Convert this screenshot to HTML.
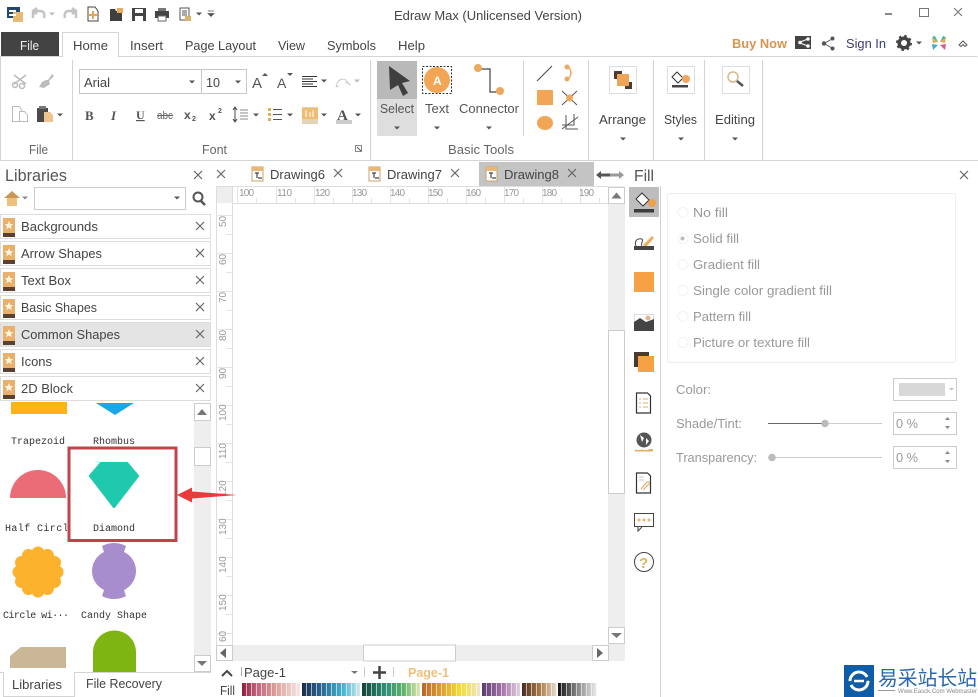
<!DOCTYPE html>
<html><head><meta charset="utf-8"><title>Edraw Max</title>
<style>
html,body{margin:0;padding:0;background:#fff;width:978px;height:697px;overflow:hidden}
svg{display:block;position:absolute;left:0;top:0}
text{font-family:"Liberation Sans","Noto Sans CJK SC",sans-serif;font-size:13px;fill:#444}
.g{fill:#999}
.m{font-family:"Liberation Mono",monospace;font-size:10px;fill:#333}
.r{font-size:10px;fill:#999}
.ln{stroke:#d4d4d4;stroke-width:1;fill:none}
.x{stroke:#555;stroke-width:1.2;fill:none}
</style></head><body>
<svg width="978" height="697" viewBox="0 0 978 697" xmlns="http://www.w3.org/2000/svg">
<defs>
<linearGradient id="c1"><stop offset="0" stop-color="#8e1f3a"/><stop offset=".25" stop-color="#c2607e"/><stop offset=".6" stop-color="#dda49a"/><stop offset="1" stop-color="#f6e6ea"/></linearGradient>
<linearGradient id="c2"><stop offset="0" stop-color="#1c2b4a"/><stop offset=".35" stop-color="#2a6a96"/><stop offset=".7" stop-color="#3fb4d0"/><stop offset="1" stop-color="#cfeaee"/></linearGradient>
<linearGradient id="c3"><stop offset="0" stop-color="#124436"/><stop offset=".4" stop-color="#2f8f78"/><stop offset=".7" stop-color="#5cb06a"/><stop offset="1" stop-color="#dfe8b0"/></linearGradient>
<linearGradient id="c4"><stop offset="0" stop-color="#b8682a"/><stop offset=".35" stop-color="#e0a030"/><stop offset=".65" stop-color="#f5dc30"/><stop offset="1" stop-color="#efe6c8"/></linearGradient>
<linearGradient id="c5"><stop offset="0" stop-color="#5c3c70"/><stop offset=".5" stop-color="#a070a4"/><stop offset="1" stop-color="#e0d0e0"/></linearGradient>
<linearGradient id="c6"><stop offset="0" stop-color="#4a2c20"/><stop offset=".5" stop-color="#a87848"/><stop offset="1" stop-color="#e8e0d4"/></linearGradient>
<linearGradient id="c7"><stop offset="0" stop-color="#111"/><stop offset=".5" stop-color="#888"/><stop offset="1" stop-color="#eee"/></linearGradient>
<pattern id="st" width="5" height="14" patternUnits="userSpaceOnUse" x="242"><rect x="4" width="1" height="14" fill="#fff" fill-opacity=".6"/></pattern>
<g id="lib"><rect x="0" y="0" width="12" height="19" fill="#e9b06c"/><rect x="0" y="15" width="12" height="4" fill="#5a4030"/><path d="M6 3l1.300 3 3 .2-2.300 2 .8 3-2.800-1.700-2.800 1.700.8-3-2.300-2 3-.2z" fill="#fff4dc"/></g>
<path id="cl" d="M-4-4L4 4M4-4L-4 4" stroke="#666" stroke-width="1.200" fill="none"/>
<g id="doc"><rect x="0" y="0" width="11" height="14" fill="#fff" stroke="#c9a36b"/><rect x="0" y="0" width="11" height="4" fill="#e8b878"/><path d="M3 6h4M5 6v5M6 11h4" stroke="#444" stroke-width="1.200" fill="none"/></g>
<path id="ar" d="M-3-1.500h6L0 1.500z" fill="#555"/>
<path id="au" d="M-5 3L0-3 5 3z" fill="#777"/>
</defs>

<!-- title bar -->
<rect x="7" y="7" width="13" height="11" fill="#25496e"/><rect x="13" y="12" width="10" height="10" fill="#e5bb74" /><rect x="9" y="10" width="7" height="2" fill="#fff"/><rect x="9" y="14" width="7" height="2" fill="#fff"/>
<path d="M33 18v-7h7c4 0 5 3 4 7M33 11l4-3M33 11l4 3" stroke="#c4c4c4" stroke-width="2.500" fill="none"/>
<path d="M49 12.500h6L52 15.500z" fill="#bbb"/>
<path d="M76 18v-7h-7c-4 0-5 3-4 7M76 11l-4-3M76 11l-4 3" stroke="#c4c4c4" stroke-width="2.500" fill="none"/>
<path d="M88 7h7l3 4v10H88z" fill="#fff" stroke="#444"/><path d="M93 11v8M89 15h8" stroke="#e6a24e" stroke-width="2"/>
<path d="M110 9h5l1 2h6v10h-12z" fill="#3f3f3f"/><rect x="117" y="8" width="6" height="5" fill="#eaa95c"/>
<path d="M132 8h14v13h-14z" fill="#444"/><rect x="135" y="9" width="8" height="4" fill="#fff"/><rect x="135" y="16" width="8" height="5" fill="#fff"/>
<rect x="155" y="11" width="14" height="7" fill="#444"/><rect x="158" y="8" width="8" height="3" fill="#777"/><rect x="158" y="16" width="8" height="5" fill="#fff" stroke="#666"/>
<path d="M180 8h9v12h-9z" fill="#fff" stroke="#555"/><path d="M182 11h5M182 13h5M182 15h5" stroke="#555"/><rect x="185" y="16" width="6" height="5" fill="#d8b36e"/>
<use href="#ar" x="199" y="14"/>
<path d="M208 11h6M208 13.500h6l-3 3z" fill="#555" stroke="#555" stroke-width=".7"/>
<text x="394" y="20" textLength="188" lengthAdjust="spacingAndGlyphs">Edraw Max (Unlicensed Version)</text>
<rect x="885" y="13" width="7" height="2" fill="#888"/>
<rect x="919.500" y="8.500" width="9" height="8" fill="none" stroke="#777"/>
<path d="M954 8l8 8M962 8l-8 8" stroke="#777" stroke-width="1.100"/>

<!-- menu tabs -->
<rect x="1" y="32" width="58" height="24" fill="#434343"/>
<text x="20" y="50" textLength="19" style="fill:#eee" lengthAdjust="spacingAndGlyphs">File</text>
<path d="M0.500 160.500V56.500H62.500V32.500H118.500V56.500H977.500" class="ln"/>
<rect x="63" y="33" width="55" height="25" fill="#fff"/>
<text x="73" y="50" textLength="35" lengthAdjust="spacingAndGlyphs">Home</text>
<text x="130" y="50" textLength="33" lengthAdjust="spacingAndGlyphs">Insert</text>
<text x="185" y="50" textLength="71" lengthAdjust="spacingAndGlyphs">Page Layout</text>
<text x="278" y="50" textLength="27" lengthAdjust="spacingAndGlyphs">View</text>
<text x="327" y="50" textLength="49" lengthAdjust="spacingAndGlyphs">Symbols</text>
<text x="398" y="50" textLength="27" lengthAdjust="spacingAndGlyphs">Help</text>
<text x="732" y="48" textLength="55" lengthAdjust="spacingAndGlyphs" style="font-weight:bold;fill:#d99450">Buy Now</text>
<rect x="795" y="36" width="16" height="13" fill="#444"/><path d="M800 42l8-3M800 43l8 3" stroke="#fff"/><circle cx="800" cy="42.500" r="1.800" fill="#fff"/><circle cx="808" cy="39" r="1.800" fill="#fff"/><circle cx="808" cy="46" r="1.800" fill="#fff"/>
<path d="M824 43.500l9-5M824 43.500l9 5" stroke="#555"/><circle cx="824" cy="43.500" r="2.200" fill="#555"/><circle cx="832.500" cy="38.500" r="2" fill="#555"/><circle cx="832.500" cy="48.500" r="2" fill="#555"/>
<text x="846" y="48" textLength="40" lengthAdjust="spacingAndGlyphs" style="fill:#3c3c78">Sign In</text>
<circle cx="904" cy="43" r="4.800" fill="none" stroke="#444" stroke-width="3.500"/><circle cx="904" cy="43" r="7" fill="none" stroke="#444" stroke-width="2" stroke-dasharray="2.500 3"/>
<use href="#ar" x="919" y="43"/>
<path d="M932 37l6 5-5 1zM946 37l-6 5 5 1z" fill="#e9a84c"/><path d="M932 37l6 5-3-6z" fill="#3db8a8"/><path d="M946 37l-6 5 3-6z" fill="#3db8a8"/><path d="M933 50l5-5-6-1z" fill="#4aa8c8"/><path d="M945 50l-5-5 6-1z" fill="#d85c8c"/>
<path d="M959 45l4-4 4 4-2 1.500-2-2-2 2z" fill="none" stroke="#555"/>

<!-- ribbon -->
<path d="M0 160.500H978" class="ln"/>
<path d="M72.500 60V160M370.500 60V160M588.500 60V160M653.500 60V160M704.500 60V160M762.500 60V160M523.500 61V136" class="ln"/>
<!-- clipboard icons -->
<path d="M14 75l12 9M26 75l-12 9" stroke="#bbb" stroke-width="1.500"/><circle cx="15" cy="85" r="2.500" fill="none" stroke="#bbb" stroke-width="1.500"/><circle cx="22" cy="86" r="2.500" fill="none" stroke="#bbb" stroke-width="1.500"/>
<path d="M52 74l2 2-5 5 1 3-6 4-5-1 3-5 4-2 2 0z" fill="#bcbcbc"/>
<path d="M12.500 106.500h7l3 5v10h-10z" fill="#fff" stroke="#bbb"/><path d="M19.500 111.500h5l3 4v6h-8z" fill="#fff" stroke="#bbb"/>
<rect x="37" y="108" width="11" height="14" fill="#4a4a4a"/><rect x="39" y="106" width="7" height="3" fill="#777"/><path d="M44 112h6l3 3v7h-9z" fill="#eec58e"/>
<use href="#ar" x="60" y="115"/>
<text x="29" y="154" textLength="19" lengthAdjust="spacingAndGlyphs" style="fill:#666">File</text>
<!-- font controls -->
<rect x="79.500" y="69.500" width="167" height="24" fill="#fff" stroke="#c8c8c8"/><path d="M201.500 69v25" stroke="#c8c8c8"/>
<text x="84" y="87" textLength="26" lengthAdjust="spacingAndGlyphs">Arial</text><use href="#ar" x="192" y="82"/>
<text x="206" y="87" textLength="14" lengthAdjust="spacingAndGlyphs">10</text><use href="#ar" x="238" y="82"/>
<text x="252" y="88" style="font-size:15px;fill:#555">A</text><path d="M262 76l3-3 3 3z" fill="#555"/>
<text x="277" y="88" style="font-size:14px;fill:#555">A</text><path d="M287 73l3 3 3-3z" fill="#555"/>
<path d="M302 76.500h15M302 79h11M302 81.500h15M302 84h11M302 86.500h15" stroke="#333"/><use href="#ar" x="324" y="81"/>
<path d="M336 87c2-10 10-10 13-3M345 82l6 3M336 87l3-1" stroke="#ccc" fill="none"/><path d="M354 79.500h6L357 82.500z" fill="#bbb"/>
<text x="85" y="120" style="font:bold 13px 'Liberation Serif',serif;fill:#555">B</text>
<text x="111" y="120" style="font:italic bold 13px 'Liberation Serif',serif;fill:#555">I</text>
<text x="136" y="119" style="font:bold 12px 'Liberation Serif',serif;fill:#555;text-decoration:underline">U</text>
<text x="157" y="119" textLength="16" lengthAdjust="spacingAndGlyphs" style="font-size:11px;fill:#666">abc</text><path d="M157 115.500h16" stroke="#666"/>
<text x="184" y="119" style="font-size:12px;font-weight:bold;fill:#555">x</text><text x="192" y="121" style="font-size:7px;font-weight:bold;fill:#555">2</text>
<text x="209" y="120" style="font-size:12px;font-weight:bold;fill:#555">x</text><text x="218" y="113" style="font-size:7px;font-weight:bold;fill:#555">2</text>
<path d="M235 108v13M233 110l2-3 2 3M233 119l2 3 2-3" stroke="#444" fill="none"/><path d="M240 110h8M240 113h8M240 116h8M240 119h8" stroke="#888"/><use href="#ar" x="256" y="115"/>
<rect x="268" y="108" width="3" height="3" fill="#e0b060"/><rect x="268" y="113" width="3" height="3" fill="#e0b060"/><rect x="268" y="118" width="3" height="3" fill="#e0b060"/><path d="M273 109.500h9M273 114.500h9M273 119.500h9" stroke="#555"/><use href="#ar" x="290" y="115"/>
<rect x="302" y="107" width="16" height="17" fill="#e5d3b8"/><rect x="302" y="108" width="16" height="11" fill="#eebd72"/><path d="M306 110v7M310 112v5M313 110v7" stroke="#fff"/><use href="#ar" x="324" y="115"/>
<text x="337" y="120" style="font:bold 15px 'Liberation Serif',serif;fill:#555">A</text><rect x="336" y="120" width="16" height="4" fill="#ccc"/><use href="#ar" x="358" y="115"/>
<text x="202" y="154" textLength="25" lengthAdjust="spacingAndGlyphs" style="fill:#666">Font</text>
<path d="M355.500 145.500h6v6h-6z" fill="none" stroke="#888"/><path d="M357 147l4 4" stroke="#555"/>
<!-- basic tools -->
<rect x="377" y="61" width="40" height="38" fill="#b9b9b9"/><rect x="377" y="99" width="40" height="37" fill="#dedede"/>
<path d="M389 66l21 15-8 2 6 10-5 3-5-11-8 5z" fill="#3f3f3f"/>
<text x="380" y="113" textLength="34" lengthAdjust="spacingAndGlyphs" style="fill:#555">Select</text><use href="#ar" x="397" y="128"/>
<rect x="422.500" y="66.500" width="29" height="27" fill="none" stroke="#333" stroke-dasharray="2 1.500"/>
<circle cx="437" cy="80" r="13" fill="#f2a555"/><text x="433" y="85" style="font-size:12px;font-weight:bold;fill:#fff">A</text>
<text x="425" y="113" textLength="24" lengthAdjust="spacingAndGlyphs" style="fill:#555">Text</text><use href="#ar" x="437" y="128"/>
<path d="M478 69h12v23h10" stroke="#444" stroke-width="1.200" fill="none"/><circle cx="478" cy="68" r="4" fill="#eea85c"/><circle cx="500" cy="91" r="4" fill="#eea85c"/>
<text x="459" y="113" textLength="60" lengthAdjust="spacingAndGlyphs" style="fill:#555">Connector</text><use href="#ar" x="489" y="128"/>
<text x="448" y="154" textLength="66" lengthAdjust="spacingAndGlyphs" style="fill:#666">Basic Tools</text>
<path d="M537 81l15-15" stroke="#444"/>
<path d="M566 67c6-1 7 12 0 12" fill="none" stroke="#f0a860" stroke-width="1.500"/><circle cx="567" cy="67" r="2.500" fill="#eea85c"/><circle cx="567" cy="79" r="2.500" fill="#eea85c"/>
<rect x="537" y="90" width="16" height="15" fill="#f2a555"/>
<path d="M562 91l15 14M577 91l-15 14" stroke="#555"/><circle cx="569.500" cy="98" r="3.500" fill="#eea85c"/>
<ellipse cx="545" cy="123" rx="8" ry="7" fill="#f2a555"/>
<path d="M566 115v14h12M562 125h12v-11M562 129l16-12" stroke="#555" fill="none"/>
<!-- arrange etc -->
<rect x="609.500" y="66.500" width="27" height="27" fill="#fff" stroke="#ddd"/><rect x="614" y="71" width="8" height="8" fill="#4c3c30"/><rect x="625" y="82" width="7" height="7" fill="#4c3c30"/><rect x="617" y="74" width="12" height="12" fill="#eea558"/>
<text x="599" y="124" textLength="47" lengthAdjust="spacingAndGlyphs">Arrange</text><use href="#ar" x="623" y="139"/>
<rect x="667.500" y="66.500" width="27" height="27" fill="#fff" stroke="#ddd"/><path d="M672 77l5-5 6 6-5 5z" fill="#fff" stroke="#333"/><circle cx="686" cy="79" r="4" fill="#eea85c"/><rect x="672" y="85" width="16" height="2.500" fill="#444"/>
<text x="664" y="124" textLength="33" lengthAdjust="spacingAndGlyphs">Styles</text><use href="#ar" x="681" y="139"/>
<rect x="722.500" y="66.500" width="27" height="27" fill="#fff" stroke="#ddd"/><circle cx="733" cy="77" r="5" fill="#fff" stroke="#d8b88c" stroke-width="1.500"/><path d="M737 81l6 5" stroke="#555" stroke-width="2.500"/>
<text x="715" y="124" textLength="40" lengthAdjust="spacingAndGlyphs">Editing</text><use href="#ar" x="735" y="139"/>

<!-- Left panel -->
<text x="5" y="181" textLength="62" lengthAdjust="spacingAndGlyphs" style="font-size:17px;fill:#555">Libraries</text>
<use href="#cl" x="198" y="175"/>
<path d="M4 198l8-7 8 7z" fill="#c99858"/><rect x="7" y="198" width="10" height="8" fill="#eec080"/>
<path d="M22 196.500h6L25 199.500z" fill="#888"/>
<rect x="34.500" y="187.500" width="151" height="22" fill="#fff" stroke="#ccc"/><use href="#ar" x="177" y="198"/>
<circle cx="198" cy="197" r="4.500" fill="none" stroke="#555" stroke-width="2"/><path d="M201 201l4 4" stroke="#555" stroke-width="2.500"/>
<!-- lib list -->
<g fill="#fff" stroke="#ddd">
<rect x="0.500" y="214.500" width="210" height="24"/><rect x="0.500" y="241.500" width="210" height="24"/><rect x="0.500" y="268.500" width="210" height="24"/><rect x="0.500" y="295.500" width="210" height="24"/><rect x="0.500" y="322.500" width="210" height="24" style="fill:#e4e4e4"/><rect x="0.500" y="349.500" width="210" height="24"/><rect x="0.500" y="376.500" width="210" height="24"/>
</g>
<use href="#lib" x="3" y="218"/><use href="#lib" x="3" y="245"/><use href="#lib" x="3" y="272"/><use href="#lib" x="3" y="299"/><use href="#lib" x="3" y="326"/><use href="#lib" x="3" y="353"/><use href="#lib" x="3" y="380"/>
<text x="21" y="231" textLength="77" lengthAdjust="spacingAndGlyphs">Backgrounds</text>
<text x="21" y="258" textLength="81" lengthAdjust="spacingAndGlyphs">Arrow Shapes</text>
<text x="21" y="285" textLength="50" lengthAdjust="spacingAndGlyphs">Text Box</text>
<text x="21" y="312" textLength="76" lengthAdjust="spacingAndGlyphs">Basic Shapes</text>
<text x="21" y="339" textLength="99" lengthAdjust="spacingAndGlyphs">Common Shapes</text>
<text x="21" y="366" textLength="31" lengthAdjust="spacingAndGlyphs">Icons</text>
<text x="21" y="393" textLength="52" lengthAdjust="spacingAndGlyphs">2D Block</text>
<use href="#cl" x="200" y="226"/><use href="#cl" x="200" y="253"/><use href="#cl" x="200" y="280"/><use href="#cl" x="200" y="307"/><use href="#cl" x="200" y="334"/><use href="#cl" x="200" y="361"/><use href="#cl" x="200" y="388"/>

<!-- shapes -->
<rect x="11" y="402" width="56" height="12" fill="#fdb414"/>
<path d="M96 403h38l-19 12z" fill="#1ca8e8"/>
<text class="m" x="11" y="444" textLength="54">Trapezoid</text>
<text class="m" x="93" y="444" textLength="42">Rhombus</text>
<path d="M10 498a28 28 0 0 1 56 0z" fill="#ea6c76"/>
<text class="m" x="5" y="531" textLength="70">Half Circle</text>
<rect x="67" y="520" width="10" height="16" fill="#fff"/>
<path d="M101 463.500h26l10.500 12.500-23.500 30.500-23.500-30.500z" fill="#1fc9ad" stroke="#1fc9ad" stroke-linejoin="round" stroke-width="3"/>
<text class="m" x="93" y="531" textLength="42">Diamond</text>
<rect x="69" y="448" width="107" height="92.500" fill="none" stroke="#c2444a" stroke-width="3"/>
<g fill="#fdb22e"><circle cx="38" cy="572" r="20"/><circle cx="57" cy="572" r="6.500"/><circle cx="54.500" cy="581.500" r="6.500"/><circle cx="47.500" cy="588.500" r="6.500"/><circle cx="38" cy="591" r="6.500"/><circle cx="28.500" cy="588.500" r="6.500"/><circle cx="21.500" cy="581.500" r="6.500"/><circle cx="19" cy="572" r="6.500"/><circle cx="21.500" cy="562.500" r="6.500"/><circle cx="28.500" cy="555.500" r="6.500"/><circle cx="38" cy="553" r="6.500"/><circle cx="47.500" cy="555.500" r="6.500"/><circle cx="54.500" cy="562.500" r="6.500"/></g>
<path d="M102 546c7-4 17-4 24 0l-2 6c16 8 16 30 0 38l2 6c-7 4-17 4-24 0l2-6c-16-8-16-30 0-38z" fill="#a78dcb"/>
<text class="m" x="3" y="618" textLength="66">Circle wi···</text>
<text class="m" x="81" y="618" textLength="66">Candy Shape</text>
<path d="M21 647h45v21H10v-12z" fill="#c9b797"/>
<path d="M93 672v-20a21.500 21.500 0 0 1 43 0v20z" fill="#7fb512"/>
<!-- left scrollbar -->
<rect x="194" y="403" width="17" height="269" fill="#eee"/>
<rect x="194.500" y="403.500" width="16" height="17" fill="#fff" stroke="#ccc"/><use href="#au" x="202" y="412"/>
<rect x="194.500" y="447.500" width="16" height="18" fill="#fff" stroke="#ccc"/>
<rect x="194.500" y="655.500" width="16" height="16" fill="#fff" stroke="#ccc"/><path d="M197 661h10l-5 5z" fill="#777"/>
<!-- bottom tabs -->
<path d="M0 672.500H3.500V696.500H74.500V672.500H211" class="ln"/>
<rect x="4" y="672" width="70" height="2" fill="#fff"/>
<text x="12" y="689" textLength="50" lengthAdjust="spacingAndGlyphs">Libraries</text>
<text x="86" y="688" textLength="76" lengthAdjust="spacingAndGlyphs">File Recovery</text>

<!-- tabs bar -->
<use href="#cl" x="221" y="174" />
<rect x="479" y="162" width="115" height="24" fill="#c4c4c4"/>
<use href="#doc" x="252" y="167"/><use href="#doc" x="369" y="167"/><use href="#doc" x="486" y="167"/>
<text x="270" y="179" textLength="55" lengthAdjust="spacingAndGlyphs">Drawing6</text><use href="#cl" x="338" y="173"/>
<text x="387" y="179" textLength="55" lengthAdjust="spacingAndGlyphs">Drawing7</text><use href="#cl" x="455" y="173"/>
<text x="504" y="179" textLength="55" lengthAdjust="spacingAndGlyphs">Drawing8</text><use href="#cl" x="572" y="173"/>
<path d="M596 175l5-4v2.500h9v3h-9v2.500z" fill="#555"/><path d="M624 175l-5-4v2.500h-9v3h9v2.500z" fill="#999"/>

<!-- canvas rulers -->
<rect x="216" y="187" width="17" height="16" fill="#eee"/>
<path d="M216 186.500H608M233 203.500H608M216.500 187V645M232.500 187V645" stroke="#ddd" fill="none"/>
<path d="M237.500 187V203M276.500 187V203M314.500 187V203M352.500 187V203M390.500 187V203M428.500 187V203M466.500 187V203M504.500 187V203M542.500 187V203M580.500 187V203" stroke="#e4e4e4"/>
<path d="M256.500 198V203M295.500 198V203M333.500 198V203M371.500 198V203M409.500 198V203M447.500 198V203M485.500 198V203M523.500 198V203M561.500 198V203M599.500 198V203" stroke="#e4e4e4"/>
<text class="r" x="239" y="196" textLength="15">100</text><text class="r" x="277" y="196" textLength="15">110</text><text class="r" x="315" y="196" textLength="15">120</text><text class="r" x="352" y="196" textLength="15">130</text><text class="r" x="390" y="196" textLength="15">140</text><text class="r" x="428" y="196" textLength="15">150</text><text class="r" x="466" y="196" textLength="15">160</text><text class="r" x="504" y="196" textLength="15">170</text><text class="r" x="542" y="196" textLength="15">180</text><text class="r" x="579" y="196" textLength="15">190</text>
<path d="M216 215.500H233M216 253.500H233M216 291.500H233M216 329.500H233M216 367.500H233M216 405.500H233M216 443.500H233M216 481.500H233M216 519.500H233M216 557.500H233M216 595.500H233M216 633.500H233" stroke="#e4e4e4"/>
<path d="M226 234.500H233M226 272.500H233M226 310.500H233M226 348.500H233M226 386.500H233M226 424.500H233M226 462.500H233M226 500.500H233M226 538.500H233M226 576.500H233M226 614.500H233" stroke="#e4e4e4"/>
<g class="vr">
<text class="r" transform="translate(226,227) rotate(-90)">50</text>
<text class="r" transform="translate(226,265) rotate(-90)">60</text>
<text class="r" transform="translate(226,303) rotate(-90)">70</text>
<text class="r" transform="translate(226,341) rotate(-90)">80</text>
<text class="r" transform="translate(226,379) rotate(-90)">90</text>
<text class="r" transform="translate(226,421) rotate(-90)">100</text>
<text class="r" transform="translate(226,459) rotate(-90)">110</text>
<text class="r" transform="translate(226,497) rotate(-90)">120</text>
<text class="r" transform="translate(226,535) rotate(-90)">130</text>
<text class="r" transform="translate(226,573) rotate(-90)">140</text>
<text class="r" transform="translate(226,611) rotate(-90)">150</text>
<text class="r" transform="translate(226,642) rotate(-90)">60</text>
</g>
<!-- canvas scrollbars -->
<rect x="608" y="186" width="17" height="475" fill="#eee"/>
<rect x="608.500" y="187.500" width="16" height="16" fill="#fff" stroke="#ccc"/><use href="#au" x="616.500" y="195.500"/>
<rect x="608.500" y="330.500" width="16" height="163" fill="#fff" stroke="#ccc"/>
<rect x="608.500" y="627.500" width="16" height="16" fill="#fff" stroke="#ccc"/><path d="M611 633h11l-5.500 5z" fill="#777"/>
<rect x="233" y="645" width="375" height="16" fill="#eee"/>
<rect x="216.500" y="645.500" width="16" height="15" fill="#fff" stroke="#ccc"/><path d="M226 648v10l-6-5z" fill="#666"/>
<rect x="363.500" y="645" width="92" height="16" fill="#fff" stroke="#ccc"/>
<rect x="592.500" y="645.500" width="16" height="15" fill="#fff" stroke="#ccc"/><path d="M597 648v10l6-5z" fill="#666"/>

<!-- red arrow over the scrollbars and ruler -->
<path d="M237 495l-45-3.500 0-4-15 7.500 15 7.500 0-4z" fill="#ea3a3e"/>

<!-- bottom bar -->
<path d="M222 676l5-5 5 5" fill="none" stroke="#444" stroke-width="2"/>
<path d="M241.500 667v9" stroke="#aaa"/>
<text x="244" y="677" textLength="42" lengthAdjust="spacingAndGlyphs">Page-1</text>
<path d="M351 671h7l-3.500 3z" fill="#777"/>
<path d="M364.500 667v10M393.500 667v10" stroke="#ccc"/>
<path d="M373 672.500h13M379.500 666v13" stroke="#444" stroke-width="2.500"/>
<text x="408" y="677" textLength="41" lengthAdjust="spacingAndGlyphs" style="font-weight:bold;fill:#eec07c">Page-1</text>
<text x="220" y="695" textLength="15" lengthAdjust="spacingAndGlyphs">Fill</text>
<rect x="242" y="683" width="58" height="13" fill="url(#c1)"/>
<rect x="302" y="683" width="58" height="13" fill="url(#c2)"/>
<rect x="362" y="683" width="58" height="13" fill="url(#c3)"/>
<rect x="422" y="683" width="58" height="13" fill="url(#c4)"/>
<rect x="482" y="683" width="38" height="13" fill="url(#c5)"/>
<rect x="522" y="683" width="35" height="13" fill="url(#c6)"/>
<rect x="558" y="683" width="39" height="13" fill="url(#c7)"/>
<rect x="242" y="683" width="355" height="13" fill="url(#st)"/>

<!-- right panel -->
<text x="634" y="181" textLength="20" lengthAdjust="spacingAndGlyphs" style="font-size:16px;fill:#555">Fill</text>
<use href="#cl" x="964" y="175"/>
<path d="M660.500 186V697" stroke="#d0d0d0"/>
<rect x="629" y="187" width="30" height="30" fill="#bdbdbd"/>
<path d="M636 199l6-6 7 7-6 6z" fill="#fff" stroke="#333"/><circle cx="652" cy="203" r="4" fill="#eea04a"/><rect x="634" y="209" width="20" height="3.500" fill="#3c3c3c"/>
<path d="M636 246c-2-6 2-8 6-7 2 2-2 5 0 7" fill="none" stroke="#444"/><path d="M643 245l9-9 2 2-8 9z" fill="#e8b060"/><rect x="634" y="246" width="20" height="4" fill="#444"/>
<rect x="634" y="272" width="20" height="20" fill="#f6a244"/>
<rect x="634.500" y="314.500" width="19" height="16" fill="#fff" stroke="#ddd"/><path d="M634 331v-9l6-4 6 4 8-3v12z" fill="#444"/><circle cx="648" cy="318" r="2.500" fill="#e8b48c"/>
<rect x="634" y="352" width="15" height="15" fill="#4a3a30"/><rect x="638" y="356" width="16" height="16" fill="#f6a244"/>
<path d="M636.500 393h11l3 3v17h-14z" fill="#fff" stroke="#333" stroke-width="1.200"/><path d="M639 399h2M643 399h5M639 403h2M643 403h5M639 407h2M643 407h5" stroke="#d8b070"/>
<circle cx="644" cy="440" r="7.500" fill="#555"/><path d="M640 435l4 3-2 4zM646 438l3 3-3 4z" fill="#fff"/><path d="M635 449c2 3 5 3 7 0 2 3 5 3 7 0h4v1h-18z" fill="#e0b060"/><rect x="635" y="450" width="18" height="1.500" fill="#e0b060"/>
<path d="M636.500 473h11l3 3v17h-14z" fill="#fff" stroke="#333" stroke-width="1.200"/><path d="M641 489l6-7c2-1 3 1 2 2l-6 6" fill="none" stroke="#dca860"/><path d="M639 477h5M639 480h5" stroke="#ccc"/>
<rect x="634.500" y="513.500" width="19" height="13" fill="#fff" stroke="#444"/><path d="M638 527v4l4-4" fill="#fff" stroke="#444"/><circle cx="639" cy="520" r="1.500" fill="#e0b878"/><circle cx="644" cy="520" r="1.500" fill="#e0b878"/><circle cx="649" cy="520" r="1.500" fill="#e0b878"/>
<circle cx="644" cy="562" r="9.500" fill="#fff" stroke="#444"/><text x="639" y="568" style="font-size:15px;font-weight:bold;fill:#e0b45c">?</text>

<rect x="667.500" y="193.500" width="288" height="169" rx="2" fill="#fff" stroke="#eee"/>
<g fill="#fff" stroke="#f2f2f2"><circle cx="683" cy="212.500" r="5"/><circle cx="683" cy="238.500" r="5"/><circle cx="683" cy="264.500" r="5"/><circle cx="683" cy="290.500" r="5"/><circle cx="683" cy="316.500" r="5"/><circle cx="683" cy="342.500" r="5"/></g>
<circle cx="682.500" cy="238.500" r="2" fill="#bbb"/>
<text class="g" x="693" y="217" textLength="35" lengthAdjust="spacingAndGlyphs">No fill</text>
<text class="g" x="693" y="243" textLength="46" lengthAdjust="spacingAndGlyphs">Solid fill</text>
<text class="g" x="693" y="269" textLength="67" lengthAdjust="spacingAndGlyphs">Gradient fill</text>
<text class="g" x="693" y="295" textLength="139" lengthAdjust="spacingAndGlyphs">Single color gradient fill</text>
<text class="g" x="693" y="321" textLength="58" lengthAdjust="spacingAndGlyphs">Pattern fill</text>
<text class="g" x="693" y="347" textLength="117" lengthAdjust="spacingAndGlyphs">Picture or texture fill</text>
<text class="g" x="676" y="394" textLength="35" lengthAdjust="spacingAndGlyphs">Color:</text>
<text class="g" x="676" y="428" textLength="66" lengthAdjust="spacingAndGlyphs">Shade/Tint:</text>
<text class="g" x="676" y="462" textLength="81" lengthAdjust="spacingAndGlyphs">Transparency:</text>
<rect x="893.500" y="378.500" width="63" height="22" fill="#fff" stroke="#ccc"/><rect x="899" y="383" width="46" height="13" fill="#d8d8d8"/><path d="M949 388h5l-2.500 2.500z" fill="#bbb"/>
<path d="M768 423.500H825" stroke="#666"/><path d="M825 423.500H882" stroke="#ccc"/><circle cx="825" cy="423.500" r="3.800" fill="#bbb"/>
<path d="M772 457.500H882" stroke="#ccc"/><circle cx="772" cy="457.500" r="3.800" fill="#bbb"/>
<rect x="893.500" y="412.500" width="63" height="22" fill="#fff" stroke="#ccc"/><rect x="893.500" y="446.500" width="63" height="22" fill="#fff" stroke="#ccc"/>
<text class="g" x="896" y="428" textLength="22" lengthAdjust="spacingAndGlyphs">0 %</text><text class="g" x="896" y="462" textLength="22" lengthAdjust="spacingAndGlyphs">0 %</text>
<path d="M945 420l2.500-3 2.500 3zM945 426l2.500 3 2.500-3zM945 454l2.500-3 2.500 3zM945 460l2.500 3 2.500-3z" fill="#888"/>

<!-- watermark -->
<rect x="842" y="663" width="136" height="34" fill="#fff"/>
<rect x="844" y="665" width="30" height="32" fill="#0f5ca8"/>
<circle cx="859" cy="681" r="9" fill="none" stroke="#fff" stroke-width="3" stroke-dasharray="24 4"/><path d="M854 681h10" stroke="#fff" stroke-width="2.500"/>
<text x="878" y="685" textLength="99" lengthAdjust="spacingAndGlyphs" style="font-size:20px;fill:#2a68ac;font-family:'Noto Sans CJK SC',sans-serif">易采站长站</text>
<path d="M878 690.500h17" stroke="#999"/>
<text x="898" y="693" textLength="79" lengthAdjust="spacingAndGlyphs" style="font-size:6px;fill:#888">Www.Easck.Com Webmaster</text>
</svg>
</body></html>
